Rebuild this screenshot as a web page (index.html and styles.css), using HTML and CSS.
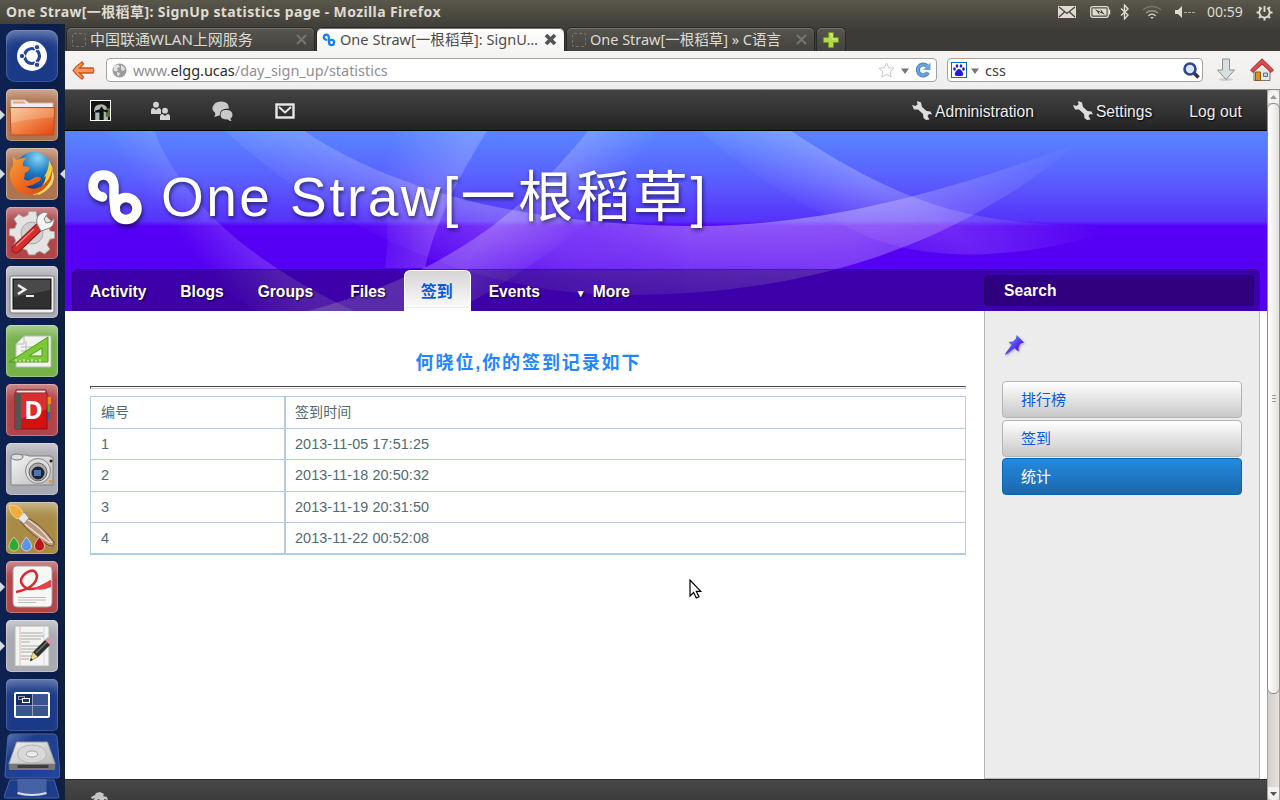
FILE: index.html
```html
<!DOCTYPE html>
<html lang="zh-CN">
<head>
<meta charset="utf-8">
<title>One Straw[一根稻草]: SignUp statistics page</title>
<link rel="stylesheet" href="styles.css">
</head>
<body>
<header class="panel">
  <span class="panel-title">One Straw[一根稻草]: SignUp statistics page - Mozilla Firefox</span>
  <div class="tray">
    <svg width="18" height="12" viewBox="0 0 18 12"><rect width="18" height="12" fill="#dfdbd2"/><path d="M1 1l8 6.500 8-6.500M1 11l5.500-5M17 11l-5.500-5" fill="none" stroke="#45433d" stroke-width="1.300"/></svg>
    <svg class="t-batt" width="21" height="12" viewBox="0 0 21 12"><rect x=".7" y=".7" width="17.600" height="10.600" rx="2" fill="none" stroke="#dfdbd2" stroke-width="1.300"/><path d="M19.500 3.500v5" stroke="#dfdbd2" stroke-width="1.500"/><rect x="2.500" y="2.500" width="14" height="7" fill="#dfdbd2"/><path d="M5 3l6 3-.5-3L15 9 9 6l.5 3z" fill="#45433d"/></svg>
    <svg class="t-bt" width="10" height="16" viewBox="0 0 10 16"><path d="M1 4.500l7 6.500-3.500 4V1L8 5l-7 6.500" fill="none" stroke="#dfdbd2" stroke-width="1.400"/></svg>
    <svg class="t-wifi" width="20" height="14" viewBox="0 0 20 14" fill="none" stroke-width="1.500"><path d="M1 5a13 13 0 0 1 18 0" stroke="#77746b"/><path d="M4 8a9 9 0 0 1 12 0" stroke="#9b978e"/><path d="M6.500 10.700a5 5 0 0 1 7 0" stroke="#dfdbd2"/><path d="M8.300 12h3.400L10 14z" fill="#dfdbd2"/></svg>
    <svg class="t-vol" width="21" height="12" viewBox="0 0 21 12"><path d="M0 4h3l4-4v12L3 8H0z" fill="#dfdbd2"/><path d="M9 6.500h3M13 6.500h3M17 6.500h3" stroke="#aaa69c"/></svg>
    <span class="clock">00:59</span>
    <svg class="t-pow" width="17" height="17" viewBox="0 0 17 17" fill="none" stroke="#dfdbd2"><path d="M5.700 4a5.200 5.200 0 1 0 5.600 0M8.500 2v6" stroke-width="1.900"/><path d="M3 3l1.600 1.600M14 3l-1.600 1.600M.5 8.500h2.700M16.500 8.500h-2.700M3 14l1.600-1.600M14 14l-1.600-1.600M8.500 14v2.500" stroke-width="2"/></svg>
  </div>
</header>
<div class="desktop">
  <nav class="launcher">
    <div class="tile navy bfb"><svg viewBox="0 0 52 52"><circle cx="26" cy="26" r="15" fill="#fff"/><circle cx="26" cy="26" r="7.500" fill="none" stroke="#27469a" stroke-width="3.200"/><g stroke="#fff" stroke-width="1.200"><path d="M14 26h7M32 15.600l-3.500 6M32 36.400l-3.500-6"/></g><g fill="#27469a" stroke="#fff" stroke-width="1"><circle cx="16" cy="26" r="2.700"/><circle cx="31" cy="17.200" r="2.700"/><circle cx="31" cy="34.800" r="2.700"/></g></svg></div>
    <div class="tile copper run"><svg viewBox="0 0 52 52"><defs><linearGradient id="fold" x2="1" y2="1"><stop stop-color="#f6c391"/><stop offset=".5" stop-color="#f08246"/><stop offset="1" stop-color="#e4440e"/></linearGradient></defs><path d="M5 11h14l4 3h24v6H5z" fill="#eee" stroke="#c9b9ad"/><path d="M7 12.500h11l2 2H7z" fill="#f19a6c"/><path d="M4 18.500h44.500L47.500 46H5z" fill="url(#fold)" stroke="#c24c1c"/><path d="M5 19.500h43v9Q25 29 5 34z" fill="#fff" opacity=".18"/></svg></div>
    <div class="tile copper run focus"><svg viewBox="0 0 52 52"><defs><radialGradient id="globe" cx=".6" cy=".15" r=".85"><stop stop-color="#8ad8f6"/><stop offset=".5" stop-color="#1a78c0"/><stop offset="1" stop-color="#123c80"/></radialGradient><linearGradient id="fox" y2="1"><stop stop-color="#f5a339"/><stop offset=".5" stop-color="#ec6a1f"/><stop offset="1" stop-color="#d83e16"/></linearGradient></defs><circle cx="28" cy="23" r="19" fill="url(#globe)"/><path d="M43 12q8 14 3 24-8 11-20 11 13-8 14-19l-2 1q5-7 5-17z" fill="#f7cf3a"/><path d="M7 8q2 3 4 4 7-3 10-2-5 3-4 8l6 1q2 3-4 6l-1 6q4 3 8 0 6-4 9-1 0 3-5 5-5 4-11 3 9 6 18-1 7-6 8-12l3-7q1 11-6 19-8 10-20 9.500Q10 46 5 34 2 23 7 18z" fill="url(#fox)"/><path d="M41 38q6-7 5-16 3 7 0 14-6 9-15 11 6-4 10-9z" fill="#fbe268"/></svg></div>
    <div class="tile red"><svg viewBox="0 0 52 52"><path d="M22 5h8l1 6 5 2 5-3 5 5-3 6 2 5 5 1v7l-5 1-3 6 3 5-6 5-5-3-4 2-1 2h-7l-2-5-5-2-5 3-5-5 3-6-2-5-5-1v-7l6-1 2-5-3-5 5-5 5 3 5-2z" fill="#e4e4e2" stroke="#aaa" transform="translate(2.500 0) scale(.92)"/><circle cx="26" cy="26" r="11" fill="#d0d0ce" stroke="#aaa"/><path d="M10 42l22-21" stroke="#8e1616" stroke-width="9" stroke-linecap="round"/><path d="M10 42l22-21" stroke="#d12e30" stroke-width="7" stroke-linecap="round"/><path d="M10 39l18-17" stroke="#ef8280" stroke-width="1.500"/><path d="M31 17q-2-9 7-12l4 1-4 6 2 4 5-1 3-4q1 9-7 11l-6 2z" fill="#f4f4f4" stroke="#858585"/></svg></div>
    <div class="tile grey"><svg viewBox="0 0 52 52"><rect x="4" y="10" width="44" height="37" rx="2" fill="#f2f2f2" stroke="#777"/><rect x="7" y="13" width="38" height="30" fill="#303030" stroke="#111"/><path d="M8 14h36v10L8 31z" fill="#fff" opacity=".12"/><path d="M12 19l7 4.500-7 4.500" fill="none" stroke="#eee" stroke-width="2.500"/><path d="M20 30h8" stroke="#eee" stroke-width="2"/></svg></div>
    <div class="tile green"><svg viewBox="0 0 52 52"><path d="M18 11h27v31H10V19z" fill="#f3f3f0" stroke="#b2bda6"/><path d="M18 11v8h-8M15 22h20M15 26h20M20 16v21" fill="none" stroke="#b8bdb3"/><path d="M3 37L42 12v25z" fill="#7cc936" stroke="#4c9a19"/><path d="M23 31l13-8v8z" fill="#e9f4dd" stroke="#4c9a19"/><path d="M10 37v-3m4 3v-2m4 2v-3m4 3v-2m4 2v-3m4 3v-2m4 2v-3" stroke="#fff" stroke-width=".8"/></svg></div>
    <div class="tile red"><svg viewBox="0 0 52 52"><rect x="34" y="13" width="11" height="7" fill="#f38a16"/><rect x="34" y="20" width="10" height="8" fill="#4eb02a"/><rect x="34" y="28" width="10" height="8" fill="#2a66b8"/><path d="M10 6h30v38H10z" fill="#eee" stroke="#771212"/><path d="M9 9h32v36H9z" fill="#d60f12" stroke="#8c1010"/><path d="M9 9h6v36H9z" fill="#555"/><path d="M15 9h26v16L15 35z" fill="#fff" opacity=".13"/><text x="27.500" y="35" text-anchor="middle" class="dict">D</text></svg></div>
    <div class="tile grey"><svg viewBox="0 0 52 52"><defs><linearGradient id="cam" y2="1"><stop stop-color="#f6f6f6"/><stop offset="1" stop-color="#b9b9b9"/></linearGradient></defs><path d="M5 15l3-3h12l3 1h21l3 2v27H5z" fill="url(#cam)" stroke="#858585"/><ellipse cx="11" cy="14" rx="6" ry="3" fill="#ddd" stroke="#777"/><circle cx="32" cy="28" r="12.500" fill="#dcdcdc" stroke="#888"/><circle cx="32" cy="29" r="9" fill="#aaa" stroke="#666"/><circle cx="32" cy="30" r="6.500" fill="#1f2430"/><rect x="28" y="27" width="7" height="6" fill="#4b74ba"/><rect x="43" y="37" width="3" height="3" fill="#f49524"/><circle cx="45" cy="18" r="1.500" fill="#222"/></svg></div>
    <div class="tile gold"><svg viewBox="0 0 52 52"><path d="M16 14q16 4 32 26 1 6-6 3Q24 32 14 19z" fill="#b99a80" stroke="#6d4a32"/><path d="M18 16q14 6 28 25M16 19q10 10 28 22" fill="none" stroke="#f1dfd0" stroke-width="1.300"/><path d="M12 17l6-7 5 6-5 6z" fill="#e9e5df" stroke="#888"/><path d="M3 3q12 0 14 8l-5 6Q4 14 3 3z" fill="#f1ad3c" stroke="#e8d39b"/><g stroke="#ffffff90"><path d="M8 35q5 6 5 9a5 5 0 0 1-10 0q0-3 5-9z" fill="#2eaa31"/><path d="M20.500 35q5 6 5 9a5 5 0 0 1-10 0q0-3 5-9z" fill="#5e93ea"/><path d="M33.500 35q5 6 5 9a5 5 0 0 1-10 0q0-3 5-9z" fill="#b8151d"/></g></svg></div>
    <div class="tile red run"><svg viewBox="0 0 52 52"><rect x="7" y="5" width="39" height="41" rx="4" fill="#f7f7f5" stroke="#a9a19d"/><path d="M10 31Q30 27 31 15 29 6 20 12 10 20 20 27q8 4 25-7" fill="none" stroke="#d92a31" stroke-width="2.600"/><path d="M26 27q9-1 19-8v7q-10 5-19 1z" fill="#e0444a"/><path d="M12 36.500h28M12 39h28M12 41.500h18" stroke="#bcbcbc" stroke-width="1.200"/></svg></div>
    <div class="tile grey run"><svg viewBox="0 0 52 52"><rect x="9" y="6" width="34" height="40" fill="#f4f4f2" stroke="#b5b5b5"/><path d="M14 6v40" stroke="#efb5b5"/><path d="M38 6v40" stroke="#c9dcf0"/><path d="M15 13h22M15 16h23M15 19h20M15 22h9M15 26h22M15 29h18M15 32h12M15 36h11M15 39h8" stroke="#a9a9a9" stroke-width="1.100"/><path d="M24 41l3-9 5 5z" fill="#ecd98b" stroke="#7b7040" stroke-width=".6"/><path d="M29.500 34.500L42 22" stroke="#2d2f2d" stroke-width="7"/><path d="M30 33l12-12" stroke="#6e736e" stroke-width="1.500"/><path d="M41.500 22.500l3-3" stroke="#dd94b4" stroke-width="7"/><path d="M24 41l1-3 2 2z" fill="#222"/></svg></div>
    <div class="tile navy"><svg viewBox="0 0 52 52"><rect x="9" y="14" width="34" height="24" rx="1" fill="#3a5391" stroke="#fff" stroke-width="2"/><rect x="10" y="15" width="16" height="11" fill="#162c63"/><path d="M26.500 15v22M10 26.500h32" stroke="#97a0b2"/><rect x="12.500" y="17.500" width="6" height="3" fill="none" stroke="#999"/><rect x="16.500" y="19.500" width="7" height="4" fill="#1f3770" stroke="#fff"/></svg></div>
    <svg class="stack" width="56" height="67" viewBox="0 0 58 67" preserveAspectRatio="none"><defs><linearGradient id="nv" y2="1"><stop stop-color="#5b76b6"/><stop offset=".3" stop-color="#1d3e8d"/><stop offset="1" stop-color="#2146a0"/></linearGradient><linearGradient id="hd" y2="1"><stop stop-color="#ededed"/><stop offset="1" stop-color="#bcbcbc"/></linearGradient></defs><path d="M6 47h46l5 17q0 1-2 1H2q-2 0-2-1z" fill="#1d3d8b" stroke="#4864a6"/><path d="M14 46h30v15q0 2-15 2t-15-2z" fill="#4562a5"/><path d="M14 60q15 4 30 0" fill="none" stroke="#ddd" stroke-width="2"/><path d="M8 1h43q3 0 4 3l3 38q0 3-3 3H4q-3 0-3-3L4 4q1-3 4-3z" fill="url(#nv)" stroke="#4864a6"/><path d="M13 9h32l8 22H5z" fill="url(#hd)" stroke="#999"/><path d="M5 31h48v5q0 1-2 1H7q-2 0-2-1z" fill="#777"/><path d="M14 32h32v3H14z" fill="#3d3d3d"/><ellipse cx="29" cy="21" rx="15" ry="9" fill="#d9d9d9" stroke="#b5b5b5"/><ellipse cx="29" cy="21" rx="6" ry="3" fill="#eee" stroke="#a2a2a2"/></svg>
  </nav>
  <main class="browser">
    <div class="tabs">
      <div class="tab"><i class="blank"></i><span class="tl t1">中国联通WLAN上网服务</span><svg class="x" width="11" height="11" viewBox="0 0 11 11"><path d="M1 1l9 9M10 1l-9 9" stroke="#77756e" stroke-width="2"/></svg></div>
      <div class="tab on"><svg class="fav" width="14" height="14" viewBox="0 0 56 60"><use href="#infinity-mark" stroke="#1580ee"/></svg><span class="tl t2">One Straw[一根稻草]: SignU…</span><svg class="x" width="13" height="13" viewBox="0 0 13 13"><path d="M2 2l9 9M11 2l-9 9" stroke="#555" stroke-width="3.800"/></svg></div>
      <div class="tab"><i class="blank"></i><span class="tl t3">One Straw[一根稻草] » C语言</span><svg class="x" width="11" height="11" viewBox="0 0 11 11"><path d="M1 1l9 9M10 1l-9 9" stroke="#77756e" stroke-width="2"/></svg></div>
      <div class="tab plus"><svg width="16" height="16" viewBox="0 0 16 16"><path d="M5.500.5h5v5h5v5h-5v5h-5v-5h-5v-5h5z" fill="#b5d84a" stroke="#6d9a1c"/><path d="M7 2h2v5h5" fill="none" stroke="#dff09a"/></svg></div>
    </div>
    <div class="toolbar">
      <svg class="back" width="23" height="19" viewBox="0 0 23 19"><path d="M10 1l1.500 2-4 4H21q1.500 2.500 0 5H7.500l4 4-1.500 2Q4 14 1 9.500 4 5 10 1z" fill="#f29a5c" stroke="#cc5420" stroke-width="1.300"/></svg>
      <div class="box url">
        <svg width="15" height="15" viewBox="0 0 15 15"><circle cx="7.500" cy="7.500" r="7" fill="#9b9b9b"/><path d="M2 3l4-1.500 2 2-3 2 1 2-2 1-2.500-1zM9 2l4 3-1 3-3-1zM5 9l3 1-1 3-2-1z" fill="#e2e2e2"/></svg>
        <span class="addr">www.<b>elgg.ucas</b>/day_sign_up/statistics</span>
        <svg class="star" width="17" height="16" viewBox="0 0 17 16"><path d="M8.500 1l2.200 4.700 5.300.6-4 3.500 1.200 5.200-4.700-2.600L3.800 15 5 9.800 1 6.300l5.300-.6z" fill="#fff" stroke="#c6c6cc"/></svg>
        <svg class="caret" width="8" height="6" viewBox="0 0 8 6"><path d="M0 .5h8L4 6z" fill="#777"/></svg>
        <svg width="16" height="16" viewBox="0 0 16 16"><path d="M12 4A5.400 5.400 0 1 0 13 10.500" fill="none" stroke="#4d87bf" stroke-width="4.200"/><path d="M12 4A5.400 5.400 0 1 0 13 10.500" fill="none" stroke="#6ea3d6" stroke-width="2.200"/><path d="M15.500.5v7.500H8z" fill="#6da3d8"/></svg>
      </div>
      <div class="box find">
        <svg width="16" height="16" viewBox="0 0 16 16"><rect x=".5" y=".5" width="15" height="15" fill="#fff" stroke="#0870b8"/><g fill="#2319d8"><ellipse cx="3.500" cy="7" rx="1.300" ry="1.800"/><ellipse cx="6" cy="4" rx="1.300" ry="1.800"/><ellipse cx="10" cy="4" rx="1.300" ry="1.800"/><ellipse cx="12.500" cy="7" rx="1.300" ry="1.800"/><path d="M8 7q2 0 4 4 1 3-2 3H6q-3 0-2-3 2-4 4-4z"/></g></svg>
        <svg class="caret" width="8" height="6" viewBox="0 0 8 6"><path d="M0 .5h8L4 6z" fill="#777"/></svg>
        <span class="query">css</span>
        <svg class="lens" width="17" height="17" viewBox="0 0 17 17"><path d="M11 11l4.500 4.500" stroke="#333" stroke-width="3.500"/><circle cx="7" cy="7" r="5.500" fill="#dce5f5" stroke="#2b4694" stroke-width="2.600"/></svg>
      </div>
      <svg class="down" width="20" height="24" viewBox="0 0 20 24"><ellipse cx="10" cy="21.500" rx="7" ry="1.500" fill="#0002"/><path d="M6.500 1h7v11h5L10 21.500 1.500 12h5z" fill="#d9dfe1" stroke="#8a9294"/></svg>
      <svg class="home" width="24" height="24" viewBox="0 0 24 24"><path d="M4 11l8-8 8 8v11.500H4z" fill="#e7e7e4" stroke="#777"/><path d="M0.500 12L12 .8 23.500 12l-2.500 2.500-9-8.500-9 8.500z" fill="#d84b4c" stroke="#a82b2e"/><path d="M5.500 14h5v8.500h-5z" fill="#d9921d" stroke="#885b12"/><path d="M13.500 15h4v3.500h-4z" fill="#bcd3e6" stroke="#68727c"/></svg>
    </div>
    <div class="view">
      <div class="page">
        <div class="topbar">
          <span class="avatar"><svg width="19" height="19" viewBox="0 0 18 18"><path d="M0 0h18v18H0z" fill="#15140f"/><path d="M3 18V9q0-6 7-6 6 1 6 7v8z" fill="#a9b9b0"/><path d="M14 7h4v8h-4z" fill="#5f6c3d"/><path d="M0 18V8l4 3v7zM8 8l2-3 2 3 4 1v2l-4-1v8H8v-7H4V9z" fill="#111"/></svg></span>
          <svg class="i-people" width="21" height="20" viewBox="0 0 21 20" fill="#d4d4d4"><circle cx="6" cy="3.700" r="2.900"/><path d="M1 13V9.500Q1 7 3.500 7L6 9l2.500-2Q11 7 11 9.500V13z"/><circle cx="15" cy="9.700" r="2.900"/><path d="M10 19v-3.500q0-2.500 2.500-2.500l2.500 2 2.500-2q2.500 0 2.500 2.500V19z"/></svg>
          <svg class="i-chat" width="21" height="20" viewBox="0 0 21 20" fill="#c9c9c9"><path d="M9 .5q8 0 8 7-9.500-.5-9.500 7L2 16q2-2 1-4.500-3-2-2.500-5Q2 .5 9 .5z"/><path d="M14 9q6.500 0 6.500 5 0 2-2 3.500 0 2 1.500 2.500-3 0-4-1.500-7.500 0-7.500-4.500 0-5 5.500-5z"/></svg>
          <svg class="i-mail" width="20" height="16" viewBox="0 0 20 16" fill="none" stroke="#e8e8e8" stroke-width="2.400"><rect x="1.500" y="1.500" width="17" height="13"/><path d="M4 4l6 5.500L16 4" stroke-width="2"/></svg>
          <div class="userlinks">
            <a class="wr"><svg width="20" height="20" viewBox="0 0 20 20"><use href="#wrench"/></svg>Administration</a>
            <a class="wr w2"><svg width="20" height="20" viewBox="0 0 20 20"><use href="#wrench"/></svg>Settings</a>
            <a>Log out</a>
          </div>
        </div>
        <div class="hero">
          <svg class="waves" width="1202" height="180" viewBox="0 0 1202 180">
            <defs>
              <linearGradient id="low" gradientUnits="userSpaceOnUse" x1="600" y1="60" x2="580" y2="165"><stop stop-color="#fff" stop-opacity=".42"/><stop offset="1" stop-color="#fff" stop-opacity=".1"/></linearGradient>
              <linearGradient id="left-in" gradientUnits="userSpaceOnUse" x1="360" y1="0" x2="1016" y2="0"><stop stop-color="#fff" stop-opacity="0"/><stop offset=".4" stop-color="#fff"/><stop offset=".65" stop-color="#fff" stop-opacity=".75"/><stop offset="1" stop-color="#fff" stop-opacity="0"/></linearGradient>
              <linearGradient id="left-out" gradientUnits="userSpaceOnUse" x1="360" y1="0" x2="622" y2="0"><stop stop-color="#fff"/><stop offset="1" stop-color="#fff" stop-opacity="0"/></linearGradient>
              <linearGradient id="tail-out" gradientUnits="userSpaceOnUse" x1="800" y1="0" x2="1040" y2="0"><stop stop-color="#fff"/><stop offset="1" stop-color="#fff" stop-opacity="0"/></linearGradient>
              <mask id="m-right" maskUnits="userSpaceOnUse" x="0" y="0" width="1202" height="180"><rect width="1202" height="180" fill="url(#left-in)"/></mask>
              <mask id="m-left" maskUnits="userSpaceOnUse" x="0" y="0" width="1202" height="180"><rect width="1202" height="180" fill="url(#left-out)"/></mask>
              <mask id="m-tail" maskUnits="userSpaceOnUse" x="0" y="0" width="1202" height="180"><rect width="1202" height="180" fill="url(#tail-out)"/></mask>
              <linearGradient id="wl" gradientUnits="userSpaceOnUse" x1="370" y1="50" x2="330" y2="125"><stop stop-color="#fff" stop-opacity=".24"/><stop offset="1" stop-color="#fff" stop-opacity="0"/></linearGradient>
              <linearGradient id="wb" gradientUnits="userSpaceOnUse" x1="450" y1="70" x2="505" y2="115"><stop stop-color="#fff" stop-opacity=".24"/><stop offset="1" stop-color="#fff" stop-opacity="0"/></linearGradient>
              <linearGradient id="wc" gradientUnits="userSpaceOnUse" x1="395" y1="30" x2="325" y2="10"><stop stop-color="#fff" stop-opacity=".18"/><stop offset="1" stop-color="#fff" stop-opacity="0"/></linearGradient>
              <linearGradient id="wd" gradientUnits="userSpaceOnUse" x1="190" y1="110" x2="145" y2="145"><stop stop-color="#fff" stop-opacity=".17"/><stop offset="1" stop-color="#fff" stop-opacity="0"/></linearGradient>
              <linearGradient id="we" gradientUnits="userSpaceOnUse" x1="800" y1="45" x2="765" y2="100"><stop stop-color="#fff" stop-opacity=".24"/><stop offset="1" stop-color="#fff" stop-opacity="0"/></linearGradient>
            </defs>
            <path d="M239 0C330 60 460 95 635 95 760 94 880 62 1016 11 930 80 800 164 560 164 400 164 260 90 160 0z" fill="url(#wl)" mask="url(#m-left)"/>
            <path d="M239 0C330 60 460 95 635 95 760 94 880 62 1016 11 930 80 800 164 560 164 400 164 260 90 160 0z" fill="url(#low)" mask="url(#m-right)"/>
            <path d="M523 0C460 78 390 140 243 180H390Q520 110 620 0z" fill="url(#wb)"/>
            <path d="M422 0Q372 80 360 137L320 137Q330 70 300 0z" fill="url(#wc)"/>
            <path d="M89 0Q130 105 289 180H190Q70 100 40 0z" fill="url(#wd)"/>
            <path d="M726 0C850 82 920 96 1060 95 980 125 860 140 780 95 700 55 670 30 635 0z" fill="url(#we)" mask="url(#m-tail)"/>
          </svg>
          <h1><svg width="56" height="60" viewBox="0 0 56 60"><g id="infinity-mark" fill="none" stroke-width="9.500" stroke-linecap="round"><path d="M15.500 29Q6 27 6 17.500 7 7 16.500 7 26 7 27 18v12q0 6 1.500 11"/><circle cx="39" cy="40.500" r="11"/></g></svg><span>One Straw[一根稻草]</span></h1>
          <div class="menubar">
            <a>Activity</a><a>Blogs</a><a>Groups</a><a class="files">Files</a><a class="cur">签到</a><a class="ev">Events</a><a class="more"><small>▼</small>More</a>
            <div class="search">Search</div>
          </div>
        </div>
        <div class="content">
          <section class="records">
            <h2>何晓位,你的签到记录如下</h2>
            <div class="rule"></div>
            <div class="grid">
              <div>编号</div><div>签到时间</div>
              <div>1</div><div>2013-11-05 17:51:25</div>
              <div>2</div><div>2013-11-18 20:50:32</div>
              <div>3</div><div>2013-11-19 20:31:50</div>
              <div>4</div><div>2013-11-22 00:52:08</div>
            </div>
          </section>
          <aside>
            <svg class="pin" width="22" height="22" viewBox="0 0 22 22"><defs><linearGradient id="pg" y2="1"><stop stop-color="#6a94ff"/><stop offset=".4" stop-color="#5b5cf5"/><stop offset=".7" stop-color="#5210e8"/></linearGradient></defs><path d="M12.500 1L20 8.500l-3.500 1-2 3.500 0 4.500-4-3.500L3 20l-2 1 1-2.500 5.500-7.500L4.500 8l4.500-.500L12 4.500z" fill="url(#pg)"/></svg>
            <a>排行榜</a><a>签到</a><a class="sel">统计</a>
          </aside>
        </div>
        <footer><svg width="20" height="20" viewBox="0 0 20 20" fill="#c5c5c5"><path d="M6 1l4-1 4 2-1 2 4 1 1 3-4-1 1 4h-3l-3-4-2 1-1 3-4-1 3-4-3 1-1-2 4-2z"/></svg></footer>
      </div>
      <div class="scroll">
        <div class="step"><svg width="7" height="4" viewBox="0 0 7 4"><path d="M0 4L3.500 0 7 4z" fill="#999"/></svg></div>
        <div class="thumb"><i></i><i></i><i></i></div>
        <div class="step end"><svg width="7" height="4" viewBox="0 0 7 4"><path d="M0 0h7L3.500 4z" fill="#555"/></svg></div>
      </div>
    </div>
  </main>
</div>
<svg class="pointer" width="14" height="22" viewBox="0 0 14 22"><path d="M1 1v16l3.600-3.500 2.700 5.500 2.700-1.200-2.700-5.500h4.500z" fill="#fff" stroke="#000" stroke-width="1.200"/></svg>
<svg class="defs" width="0" height="0"><defs><path id="wrench" d="M5 0l4 1.500 1 4.500 4.500 4 4 .5 1.500 3-3-.5-1.500 2 2 3.500-3.500.5-2.500-2-.5-4-5-4.500H2L0 4l3.500 1L5.500 3.500z" fill="#ddd"/></defs></svg>
</body>
</html>
```
FILE: styles.css
```css
* { box-sizing: border-box; }
body { margin: 0; width: 1280px; height: 800px; overflow: hidden; position: relative; font-family: "Liberation Sans", "Noto Sans CJK SC", sans-serif; background: #fff; }
svg { display: block; flex: none; }
h1, h2 { margin: 0; }

.panel { height: 24px; display: flex; align-items: center; justify-content: space-between; padding: 0 7px 0 6px; background: linear-gradient(#5a574b, #43413a); color: #dfdbd2; font-family: "Noto Sans", "Noto Sans CJK SC", sans-serif; }
.panel-title { font-size: 14px; line-height: 24px; font-weight: bold; white-space: nowrap; letter-spacing: .39px; }
.tray { display: flex; align-items: center; }
.t-batt { margin-left: 14px; }
.t-bt { margin-left: 9px; }
.t-wifi { margin-left: 12px; }
.t-vol { margin-left: 13px; }
.clock { margin-left: 11px; width: 37px; font-size: 14px; line-height: 24px; letter-spacing: 0; }
.t-pow { margin-left: 12px; }

.desktop { display: flex; height: 776px; }
.launcher { width: 65px; padding: 6px 0 0 6px; display: flex; flex-direction: column; gap: 7px; background: linear-gradient(90deg, #0d2251, #0a1d4c 85%, #13203c); overflow: hidden; }
.tile { position: relative; flex: none; width: 52px; height: 52px; border-radius: 5px; box-shadow: inset 0 0 0 1px #ffffff45, inset 0 12px 12px -6px #ffffff70; }
.tile svg { width: 52px; height: 52px; }
.navy { background: #1a3987; box-shadow: inset 0 0 0 1px #ffffff25, inset 0 12px 12px -6px #ffffff60; }
.bfb { border-radius: 9px; }
.copper { background: #ae7350; }
.red { background: #b04448; }
.grey { background: #a9a9b1; }
.green { background: #76b14a; }
.gold { background: #a98b46; }
.run::before { content: ""; position: absolute; left: -6px; top: 21px; border: 5px solid transparent; border-left-color: #d5d9e2; border-right: 0; }
.focus::after { content: ""; position: absolute; right: -7px; top: 21px; border: 5px solid transparent; border-right-color: #d5d9e2; border-left: 0; }
.dict { font: bold 25px "Open Sans", sans-serif; fill: #fff; }
.stack { margin: -5px 0 0 -2px; }

.browser { flex: 1; display: flex; flex-direction: column; min-width: 0; font-family: "Noto Sans", "Noto Sans CJK SC", sans-serif; }
.tabs { height: 27px; display: flex; gap: 3px; align-items: flex-end; padding-left: 2px; background: linear-gradient(#43413a, #3c3b37 8px); }
.tab { width: 247px; height: 23px; display: flex; align-items: center; padding: 0 7px 0 5px; border-radius: 5px 5px 0 0; background: linear-gradient(#565550, #43423e); box-shadow: inset 0 1px #74736d, 0 0 0 1px #2a2926; color: #dfdbd2; }
.tab.on { background: linear-gradient(#fff, #f5f4f2); color: #4c4c4c; }
.tab.plus { width: 28px; padding: 0 0 0 6px; }
.blank { width: 14px; height: 14px; border: 1px dashed #77756d; border-radius: 2px; margin-right: 4px; }
.fav { margin-right: 4px; }
.tl { flex: 1; font-size: 15px; line-height: 23px; white-space: nowrap; }
.t2, .t3 { font-size: 14.500px; }
.t2 { letter-spacing: .04px; }
.t3 { letter-spacing: -.02px; }
.toolbar { height: 39px; display: flex; align-items: center; padding: 0 6px 0 7px; background: linear-gradient(#f5f4f2, #efeeec); border-bottom: 1px solid #8c8b88; }
.box { height: 24px; display: flex; align-items: center; border: 1px solid #a3a29f; border-radius: 4px; background: #fff; }
.back { margin-right: 11px; }
.url { width: 831px; padding: 0 5px; }
.addr { flex: 1; margin-left: 6px; font-size: 14.500px; line-height: 22px; color: #8f8f8f; letter-spacing: -.03px; }
.addr b { font-weight: normal; color: #2c2c2c; }
.url .caret { margin: 2px 6px 0; }
.find { width: 256px; margin-left: 10px; padding: 0 2px 0 3px; }
.find .caret { margin: 2px 6px 0 4px; }
.query { flex: 1; font-size: 14.500px; line-height: 22px; color: #3c3c3c; }
.down { margin-left: 13px; }
.home { margin-left: auto; }

.view { flex: 1; display: flex; min-height: 0; font-family: "Liberation Sans", "Noto Sans CJK SC", sans-serif; }
.page { width: 1202px; display: flex; flex-direction: column; background: #fff; }
.topbar { height: 41px; display: flex; align-items: center; padding: 1px 25px 0; background: linear-gradient(#434343, #232323); border-bottom: 1px solid #000; }
.avatar { border: 1px solid #fff; background: #15140f; }
.i-people { margin-left: 39px; }
.i-chat { margin-left: 41px; }
.i-mail { margin-left: 42px; }
.userlinks { margin-left: auto; display: flex; color: #eee; font-size: 15.600px; line-height: 36px; text-shadow: 1px 1px 2px #000; }
.userlinks a { display: flex; align-items: center; margin-left: 36px; padding-top: 2px; letter-spacing: 0; }
.userlinks svg { margin: -2px 3px 0 0; }
.userlinks .w2 { margin-left: 39px; }
.userlinks a:last-child { margin-left: 37px; letter-spacing: .1px; }

.hero { height: 180px; position: relative; display: flex; flex-direction: column; justify-content: space-between; background: linear-gradient(#5886ff 0, #5a5dff 50px, #5732fa 90px, #5500f5 95px, #5600ee 180px); }
.waves { position: absolute; left: 0; top: 0; }
.hero h1 { position: relative; display: flex; align-items: center; padding: 31px 0 0 22px; height: 100px; color: #fff; font-weight: normal; font-size: 55px; line-height: 68px; letter-spacing: 2.450px; white-space: nowrap; text-shadow: 1px 2px 4px #0009; }
.hero h1 svg { stroke: #fff; filter: drop-shadow(1px 3px 2px #0008); margin: 2px 18px 0 0; }
.menubar { position: relative; height: 42px; margin: 0 7px; display: flex; align-items: flex-end; border: 1px solid #0003; border-bottom: 0; border-radius: 6px 6px 0 0; background: #0000004a; color: #fff; font-weight: bold; font-size: 15.600px; line-height: 38px; text-shadow: 1px 1px 2px #000c; }
.menubar a { height: 41px; padding: 3px 17px 0; }
.menubar .files { margin-left: 3px; }
.menubar .cur { width: 67px; font-size: 16px; color: #0a5bd8; background: linear-gradient(#d5d5d5, #fafafa 36px, #ddd 36px, #fff 37px); border: 1px solid #fff; border-bottom: 0; border-radius: 6px 6px 0 0; padding: 2px 16px 0; text-shadow: none; margin-left: 1px; }
.menubar .ev { padding-left: 18px; }
.more small { font-size: 10px; margin: 0 7px 0 2px; vertical-align: 0; }
.search { position: absolute; left: 911px; top: 5px; width: 270px; height: 31px; padding-left: 19px; line-height: 30px; letter-spacing: .1px; background: #2e0080; border: 1px solid #23006b; border-radius: 4px; text-shadow: none; }

.content { height: 468px; display: flex; }
.records { flex: 1; padding: 38px 18px 0 25px; }
.records h2 { text-align: center; font-size: 18px; line-height: 28px; letter-spacing: 1.900px; padding-left: 1px; color: #1f86ff; }
.rule { height: 3px; margin: 9px 0 7px; border: 1px solid #444; border-right-color: #ccc; border-bottom-color: #ccc; }
.grid { height: 159px; display: grid; grid-template-columns: 195px 1fr; grid-template-rows: 32px 31px 32px 31px 32px; border: 1px solid #b0cbe2; border-bottom: 0; color: #4f6b72; font-size: 14.400px; line-height: 30px; letter-spacing: .08px; }
.grid div { border-bottom: 1px solid #b0cbe2; padding-left: 9px; }
.grid div:nth-child(-n+2) { font-size: 14px; line-height: 31px; }
.grid div:nth-child(odd) { border-right: 2px solid #b0cbe2; padding-left: 10px; }
.grid div:nth-last-child(-n+2) { border-bottom-width: 2px; }
aside { width: 276px; margin-right: 7px; padding: 23px 17px 0; background: #ececec; border: 1px solid #b7b7b7; border-top: 0; }
.pin { margin: 0 0 25px 2px; filter: drop-shadow(1px 1px 1px #0005); }
aside a { display: block; height: 37px; margin-bottom: 2px; padding-left: 18px; line-height: 35px; font-size: 15px; color: #0a5bd8; border: 1px solid #b5b5b5; border-radius: 4px; background: linear-gradient(#fff, #c8c8c8); }
aside .sel { margin-top: -1px; color: #fff; border-color: #0565b5; background: linear-gradient(#2589dd, #1a69ad); }
footer { flex: 1; padding: 12px 0 0 25px; background: linear-gradient(#474747, #3d3d3d); border-top: 1px solid #262c29; overflow: hidden; }

.scroll { width: 13px; display: flex; flex-direction: column; background: linear-gradient(90deg, #d3cfcc, #e3e0dd); border: solid #a5a29f; border-width: 0 1px; }
.step { height: 13px; display: grid; place-items: center; background: #f3f2f1; border-radius: 6px 6px 0 0; }
.thumb { height: 591px; display: flex; flex-direction: column; gap: 2px; align-items: center; justify-content: center; border: 1px solid #8d8a87; border-radius: 6px; margin: 0 -1px; background: linear-gradient(90deg, #fff, #e4e2df); }
.thumb i { width: 4px; height: 1px; background: #999; }
.end { margin-top: auto; border-radius: 0 0 6px 6px; }

.pointer { position: absolute; left: 689px; top: 579px; }
.defs { position: absolute; }
```
